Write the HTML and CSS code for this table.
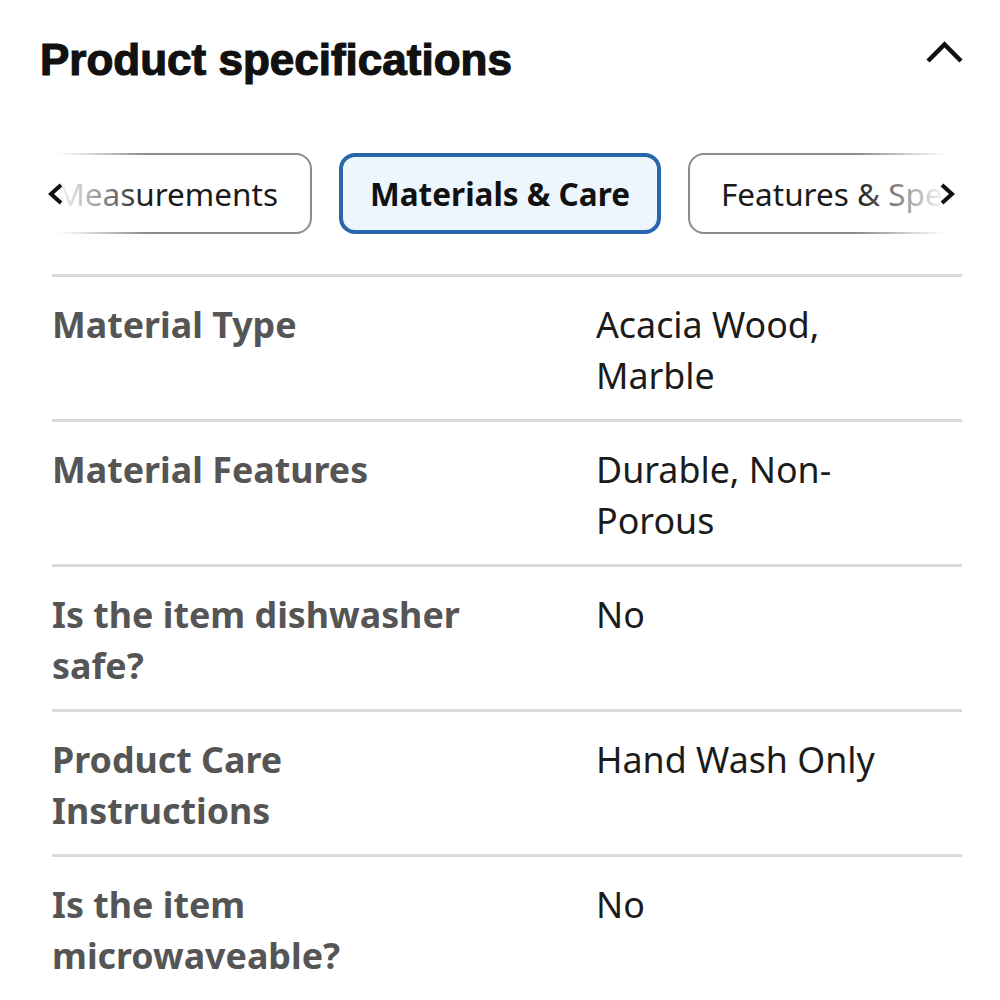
FILE: index.html
```html
<!DOCTYPE html>
<html>
<head>
    <title>Product specifications</title>
    <link rel="stylesheet" href="styles.css">
</head>
<body>
    <div class="panel">
        <div class="panel-head">
            <h2>Product specifications</h2>
            <svg class="collapse" width="40" height="24" viewBox="0 0 40 24">
                <path d="M4 21 L20.5 4.5 L37 21" fill="none" stroke="#111" stroke-width="4.5"/>
            </svg>
        </div>

        <div class="tabs">
            <div class="tab-track">
                <button class="tab first">Measurements</button>
                <button class="tab active">Materials &amp; Care</button>
                <button class="tab">Features &amp; Specs</button>
                <button class="tab">Dimensions</button>
            </div>
            <div class="fade left">
                <svg width="18" height="24" viewBox="0 0 18 24"><path d="M15 3 L5 12 L15 21" fill="none" stroke="#111" stroke-width="4"/></svg>
            </div>
            <div class="fade right">
                <svg width="18" height="24" viewBox="0 0 18 24"><path d="M3 3 L13 12 L3 21" fill="none" stroke="#111" stroke-width="4"/></svg>
            </div>
        </div>

        <div class="specs">
            <div class="row">
                <div class="label">Material Type</div>
                <div class="value">Acacia Wood, Marble</div>
            </div>
            <div class="row">
                <div class="label">Material Features</div>
                <div class="value">Durable, Non-Porous</div>
            </div>
            <div class="row">
                <div class="label">Is the item dishwasher safe?</div>
                <div class="value">No</div>
            </div>
            <div class="row">
                <div class="label">Product Care Instructions</div>
                <div class="value">Hand Wash Only</div>
            </div>
            <div class="row">
                <div class="label">Is the item microwaveable?</div>
                <div class="value">No</div>
            </div>
        </div>
    </div>
</body>
</html>
```

FILE: styles.css
```css
body { margin: 0; background: #fff; font-family: 'Noto Sans', 'Open Sans', sans-serif; color: #1a1a1a; }
.panel { padding: 0 38px 0 40px; height: 1000px; overflow: hidden; }

.panel-head {
    display: flex;
    justify-content: space-between;
    align-items: flex-start;
    padding-top: 34px;
}
h2 {
    margin: 0;
    font-family: 'Liberation Sans', Arial, sans-serif;
    font-weight: 700;
    font-size: 44px;
    line-height: 51px;
    letter-spacing: 0;
    color: #111;
    -webkit-text-stroke: 1.2px #111;
}
.collapse { margin-top: 6px; margin-right: -2px; }

.tabs {
    position: relative;
    margin-top: 68px;
    overflow: hidden;
}
.tab-track {
    display: flex;
    gap: 27px;
    margin-left: -12px;
}
.tab {
    flex: none;
    height: 81px;
    padding: 0 31px;
    background: #fff;
    border: 2px solid #8c8c8c;
    border-radius: 16px;
    font-family: 'Noto Sans', sans-serif;
    font-size: 31.5px;
    color: #1a1a1a;
    display: flex;
    align-items: center;
}
.tab.first { width: 284px; justify-content: flex-end; padding: 0 32px 0 0; }
.tab.active {
    border: 4px solid #2a66ac;
    background: #eef6fd;
    font-weight: 700;
    color: #111;
    padding: 0 27px;
}
.fade {
    position: absolute;
    top: 0;
    bottom: 0;
    display: flex;
    align-items: center;
}
.fade.left { left: 0; width: 100px; padding-left: 6px; background: linear-gradient(to right, #fff 15%, rgba(255,255,255,0.75) 40%, rgba(255,255,255,0) 100%); }
.fade.right { right: 0; width: 100px; justify-content: flex-end; padding-right: 5px; background: linear-gradient(to left, #fff 15%, rgba(255,255,255,0.6) 50%, rgba(255,255,255,0) 100%); }

.specs { margin: 40px 0 0 12px; }
.row {
    display: grid;
    grid-template-columns: 440px 320px;
    column-gap: 104px;
    border-top: 3px solid #d9d9d9;
    padding: 22px 0 18px;
    font-size: 35.8px;
    line-height: 51px;
}
.label { font-weight: 700; color: #555; }
.value { color: #1b1b1b; }
```
